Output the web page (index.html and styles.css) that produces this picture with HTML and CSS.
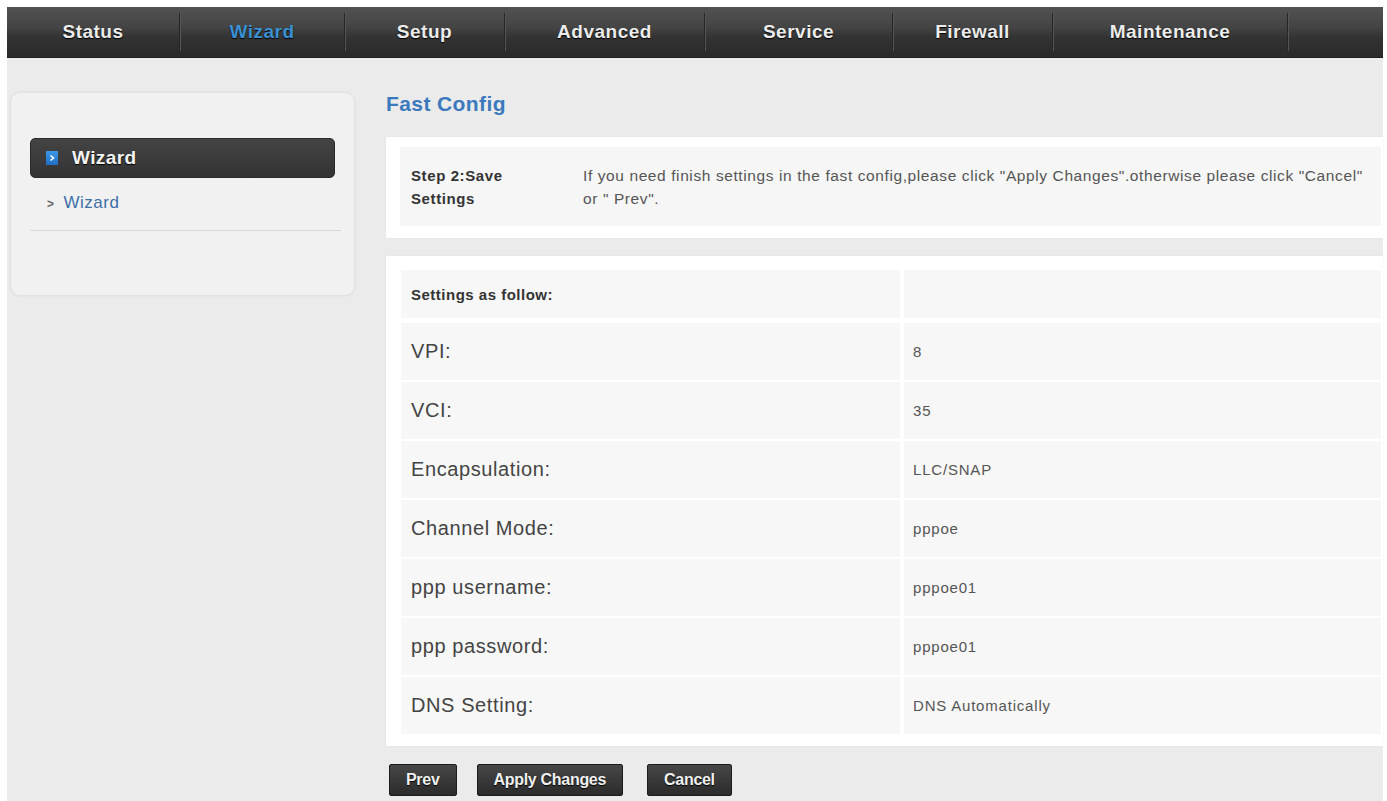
FILE: index.html
```html
<!DOCTYPE html>
<html lang="en">
<head>
    <meta charset="UTF-8">
    <meta name="viewport" content="width=device-width, initial-scale=1.0">
    <title>Fast Config</title>
    <link rel="stylesheet" href="styles.css">
</head>
<body>
    <div class="frame">
        <ul class="topnav">
            <li><a href="#">Status</a></li>
            <li class="active"><a href="#">Wizard</a></li>
            <li><a href="#">Setup</a></li>
            <li><a href="#">Advanced</a></li>
            <li><a href="#">Service</a></li>
            <li><a href="#">Firewall</a></li>
            <li><a href="#">Maintenance</a></li>
        </ul>

        <div class="page">
            <aside class="sidebar">
                <div class="side-head">
                    <span class="side-icon">
                        <svg width="8" height="8" viewBox="0 0 8 8"><path d="M2.5 1.5 L5.5 4 L2.5 6.5" fill="none" stroke="#fff" stroke-width="1.6"/></svg>
                    </span>
                    Wizard
                </div>
                <a class="side-link" href="#"><span class="side-arrow">&gt;</span>Wizard</a>
                <div class="side-rule"></div>
            </aside>

            <main class="content">
                <h2 class="title">Fast Config</h2>

                <div class="panel step">
                    <div class="step-inner">
                        <div class="step-label">Step 2:Save<br>Settings</div>
                        <div class="step-text">If you need finish settings in the fast config,please click "Apply Changes".otherwise please click "Cancel" or " Prev".</div>
                    </div>
                </div>

                <div class="panel summary">
                    <div class="settings">
                        <div class="cell head">Settings as follow:</div>
                        <div class="cell head"></div>

                        <div class="cell label">VPI:</div>
                        <div class="cell value">8</div>

                        <div class="cell label">VCI:</div>
                        <div class="cell value">35</div>

                        <div class="cell label">Encapsulation:</div>
                        <div class="cell value">LLC/SNAP</div>

                        <div class="cell label">Channel Mode:</div>
                        <div class="cell value">pppoe</div>

                        <div class="cell label">ppp username:</div>
                        <div class="cell value">pppoe01</div>

                        <div class="cell label">ppp password:</div>
                        <div class="cell value">pppoe01</div>

                        <div class="cell label">DNS Setting:</div>
                        <div class="cell value">DNS Automatically</div>
                    </div>
                </div>

                <div class="actions">
                    <button class="btn">Prev</button>
                    <button class="btn wide">Apply Changes</button>
                    <button class="btn">Cancel</button>
                </div>
            </main>
        </div>
    </div>
</body>
</html>
```

FILE: styles.css
```css
body {
    margin: 0;
    background: #fff;
    font-family: 'Liberation Sans', Arial, sans-serif;
    color: #444;
}
.frame {
    margin: 7px 4px 0 7px;
    min-height: 794px;
    background: #ebebeb;
}
.topnav {
    display: grid;
    grid-template-columns: 173px 165px 160px 200px 188px 160px 235px 1fr;
    height: 51px;
    margin: 0;
    padding: 0;
    list-style: none;
    background: linear-gradient(#525252 0%, #444 40%, #333 60%, #2a2a2a 100%);
    border-bottom: 1px solid #1e1e1e;
    box-sizing: border-box;
}
.topnav li {
    display: flex;
    align-items: center;
    justify-content: center;
    border-right: 1px solid #262626;
    box-shadow: 1px 0 0 #555;
    margin: 6px 0;
}
.topnav a {
    color: #ececec;
    text-decoration: none;
    font-weight: bold;
    font-size: 19px;
    letter-spacing: 0.5px;
    text-shadow: 0 1px 1px #000;
}
.topnav li.active a {
    color: #3a91d4;
}
.page {
    display: flex;
    align-items: flex-start;
    gap: 31px;
    padding: 34px 0 0 3px;
}
.sidebar {
    width: 345px;
    height: 204px;
    flex: none;
    box-sizing: border-box;
    padding: 45px 0 0 19px;
    background: #f1f1f1;
    border: 1px solid #e2e2e2;
    border-radius: 10px;
    box-shadow: 0 0 3px rgba(0, 0, 0, 0.06);
}
.side-head {
    display: flex;
    align-items: center;
    width: 305px;
    height: 40px;
    box-sizing: border-box;
    padding-left: 15px;
    background: linear-gradient(#444, #333);
    border: 1px solid #2a2a2a;
    border-radius: 5px;
    color: #f4f4f4;
    font-weight: bold;
    font-size: 19px;
    letter-spacing: 0.4px;
    text-shadow: 0 1px 1px #000;
}
.side-icon {
    display: flex;
    align-items: center;
    justify-content: center;
    width: 12px;
    height: 14px;
    margin-right: 14px;
    background: linear-gradient(#3c96e6, #1f6fc4);
}
.side-link {
    display: block;
    margin: 14px 0 0 17px;
    line-height: 22px;
    font-size: 17px;
    letter-spacing: 0.5px;
    color: #3d6fa9;
    text-decoration: none;
}
.side-arrow {
    display: inline-block;
    margin-right: 9px;
    font-size: 12px;
    font-weight: bold;
    color: #666;
}
.side-rule {
    width: 311px;
    margin-top: 15px;
    border-top: 1px solid #d8d8d8;
}
.content {
    flex: 1;
}
.title {
    margin: 0 0 21px;
    line-height: 24px;
    font-size: 21px;
    letter-spacing: 0.4px;
    color: #3a79bd;
}
.panel {
    background: #fff;
    box-shadow: 0 0 2px rgba(0, 0, 0, 0.05);
}
.step {
    padding: 10px 2px 12px 14px;
}
.step-inner {
    display: flex;
    height: 79px;
    box-sizing: border-box;
    padding: 17px 0 0 11px;
    background: #f6f6f6;
    line-height: 23px;
}
.step-label {
    width: 172px;
    flex: none;
    font-weight: bold;
    font-size: 15px;
    letter-spacing: 0.6px;
    color: #333;
}
.step-text {
    max-width: 790px;
    font-size: 15.5px;
    letter-spacing: 0.6px;
    color: #555;
}
.summary {
    margin-top: 18px;
    padding: 14px 2px 12px 15px;
}
.settings {
    display: grid;
    grid-template-columns: 499px 1fr;
    column-gap: 4px;
    row-gap: 2px;
}
.cell {
    display: flex;
    align-items: center;
    height: 57px;
    background: #f7f7f7;
}
.cell.head {
    height: 48px;
    margin-bottom: 3px;
    padding-left: 10px;
    font-weight: bold;
    font-size: 15px;
    letter-spacing: 0.5px;
    color: #333;
}
.cell.label {
    padding-left: 10px;
    font-size: 20px;
    letter-spacing: 0.6px;
    color: #444;
}
.cell.value {
    padding-left: 9px;
    font-size: 15px;
    letter-spacing: 0.8px;
    color: #555;
}
.actions {
    display: flex;
    gap: 20px;
    margin: 18px 0 0 3px;
}
.btn {
    height: 32px;
    padding: 0 16px;
    background: linear-gradient(#474747, #2b2b2b);
    border: 1px solid #1c1c1c;
    border-radius: 2px;
    color: #f0f0f0;
    font-family: 'Liberation Sans', Arial, sans-serif;
    font-weight: bold;
    font-size: 16px;
    letter-spacing: -0.3px;
    text-shadow: 0 1px 1px #000;
    cursor: pointer;
}
.btn.wide {
    margin-right: 4px;
}
```
